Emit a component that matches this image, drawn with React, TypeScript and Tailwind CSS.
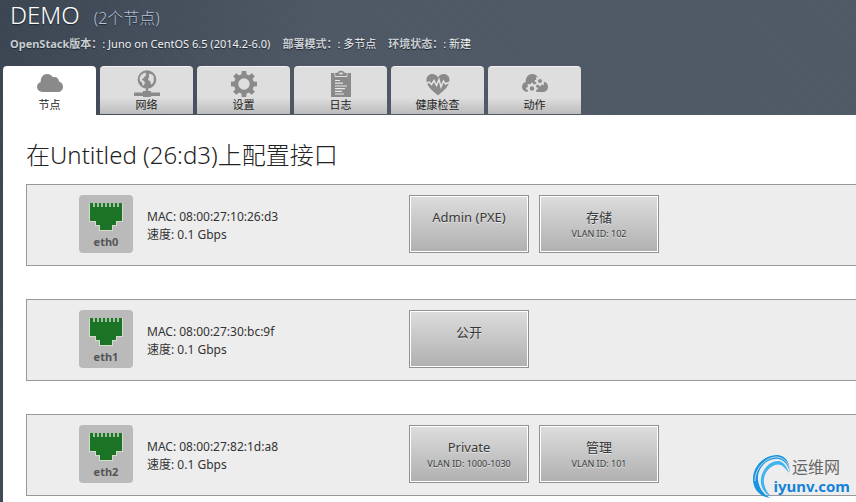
import type { ReactNode } from 'react'

type Network = { name: string; vlan?: string }
type Nic = { name: string; mac: string; speed: string; networks: Network[] }

const NICS: Nic[] = [
  {
    name: 'eth0',
    mac: '08:00:27:10:26:d3',
    speed: '0.1 Gbps',
    networks: [{ name: 'Admin (PXE)' }, { name: '存储', vlan: '102' }],
  },
  {
    name: 'eth1',
    mac: '08:00:27:30:bc:9f',
    speed: '0.1 Gbps',
    networks: [{ name: '公开' }],
  },
  {
    name: 'eth2',
    mac: '08:00:27:82:1d:a8',
    speed: '0.1 Gbps',
    networks: [{ name: 'Private', vlan: '1000-1030' }, { name: '管理', vlan: '101' }],
  },
]

const TEETH = [0, 45, 90, 135, 180, 225, 270, 315]

// ── Icons ───────────────────────────────────────────────────────────────────
function Icon({ children }: { children: ReactNode }) {
  return (
    <svg viewBox="0 0 28 28" className="h-7 w-7 shrink-0 text-[#8a8a8a]" fill="currentColor" aria-hidden="true">
      {children}
    </svg>
  )
}

const CLOUD =
  'M6.5 23C3.500 23 1 20.800 1 17.800C1 15.500 2.500 13.700 4.700 13C4.500 8.500 7.300 5 11.200 5C13.800 5 15.800 6.300 17 8.300C20 7.300 22.800 9.200 22.900 12.400C25.500 13 27 15.200 27 17.700C27 20.800 24.800 23 21.800 23Z'

function CloudIcon() {
  return (
    <Icon>
      <path d={CLOUD} />
    </Icon>
  )
}

function NetworkIcon() {
  return (
    <Icon>
      <circle cx="14" cy="10.500" r="9.300" />
      {/* continents */}
      <path
        d="M6.500 9L8 6L11 4L13.500 3.800L12.500 5.200L13.500 6.200L11.500 7.500L11 9L9.500 9.500L9 11L11 12L12 14L10.500 16.500L9.800 17L9 13.500L7 12Z"
        fill="#dedede"
      />
      <path
        d="M16.500 4.500L19.500 5.700L21 8L20.500 9.500L21 11L20 14L18.500 15.500L17.500 14L17.300 12L15.500 11.500L15 9.500L16.300 8L15.700 6.500Z"
        fill="#dedede"
      />
      <path d="M12.800 19H15.200V22H18V23.500H27V27H18V28H10V27H1V23.500H10V22H12.800Z" />
    </Icon>
  )
}

function GearShape({ cx, cy, scale, hole }: { cx: number; cy: number; scale: number; hole: number }) {
  return (
    <g transform={`translate(${cx} ${cy}) scale(${scale})`}>
      {TEETH.map(angle => (
        <path key={angle} d="M-2.700 -8L-2.200 -13H2.200L2.700 -8Z" transform={`rotate(${angle})`} />
      ))}
      <circle r={(10 + hole) / 2} fill="none" stroke="currentColor" strokeWidth={10 - hole} />
    </g>
  )
}

function GearIcon() {
  return (
    <Icon>
      <GearShape cx={14} cy={15} scale={1} hole={5.7} />
    </Icon>
  )
}

function ClipboardIcon() {
  return (
    <Icon>
      <path d="M4 4H24V28H4Z" />
      <path d="M8 4V7.500H20V4" fill="none" stroke="#dedede" strokeWidth="1" />
      <path d="M8.500 6.800V4L11 3.500C11.500 2 12.500 1.800 14 1.800C15.500 1.800 16.500 2 17 3.500L19.500 4V6.800Z" />
      <ellipse cx="14" cy="4.500" rx="2" ry="1" fill="#dedede" />
      <path
        d="M8 11.500H13M8 14.200H16M8 17H20M8 19.700H18M8 22.400H15M8 25H17"
        stroke="#e8e8e8"
        strokeWidth="1.200"
        fill="none"
      />
    </Icon>
  )
}

function HealthIcon() {
  return (
    <Icon>
      <path d="M14 26.500C10 22.500 2.500 18 2.500 11C2.500 7.500 5 5 8.300 5C10.800 5 13 6.500 14 8.500C15 6.500 17.200 5 19.700 5C23 5 25.500 7.500 25.500 11C25.500 18 18 22.500 14 26.500Z" />
      <path
        d="M2 15L5 13L7.500 15.500L10 11.500L12.500 16.500L15 10.500L17 18L19.500 12L21.500 15L26 13"
        stroke="#e4e4e4"
        strokeWidth="1.500"
        fill="none"
      />
    </Icon>
  )
}

function ActionsIcon() {
  return (
    <Icon>
      <path d={CLOUD} />
      <g className="text-[#dedede]">
        <GearShape cx={19} cy={12} scale={0.4} hole={5} />
        <GearShape cx={11} cy={19.5} scale={0.45} hole={5} />
      </g>
    </Icon>
  )
}

function PortIcon() {
  return (
    <svg viewBox="0 0 34 29" className="h-[29px] w-[34px]" aria-hidden="true">
      <path d="M0 1H34V20H28V24H24V29H10V24H6V20H0Z" fill="#d3dcc8" />
      <path d="M1 1H33V19H27V23H23V28H11V23H7V19H1Z" fill="#1b7426" />
      <path d="M5 1V5M9 1V5M13 1V5M17 1V5M21 1V5M25 1V5M29 1V5" stroke="#b5c9b0" strokeWidth="1.800" />
    </svg>
  )
}

// ── Header ──────────────────────────────────────────────────────────────────
const TABS = [
  { label: '节点', icon: <CloudIcon />, active: true },
  { label: '网络', icon: <NetworkIcon /> },
  { label: '设置', icon: <GearIcon /> },
  { label: '日志', icon: <ClipboardIcon /> },
  { label: '健康检查', icon: <HealthIcon /> },
  { label: '动作', icon: <ActionsIcon /> },
]

const INFO = [
  { label: 'OpenStack版本：', value: 'Juno on CentOS 6.5 (2014.2-6.0)' },
  { label: '部署模式：', value: '多节点' },
  { label: '环境状态：', value: '新建' },
]

function Header() {
  return (
    <header className="text-white">
      <h1 className="flex h-8 items-baseline gap-[14px] pl-[7px] text-2xl leading-[30px] font-light [text-shadow:0_1px_1px_#1f2730]">
        DEMO
        <span className="text-base leading-5 text-[#b4c4dc]">(2个节点)</span>
      </h1>
      <dl className="mt-1 flex h-4 gap-3 pl-[7px] text-[11px] leading-4 whitespace-nowrap [text-shadow:0_1px_1px_#1f2730]">
        {INFO.map(item => (
          <div key={item.label} className="flex">
            <dt className="font-bold text-[#c9cdd1]">{item.label}</dt>
            <dd className="text-[#f0f1f2]">: {item.value}</dd>
          </div>
        ))}
      </dl>
      <nav className="mt-[14px] flex gap-1">
        {TABS.map(tab => (
          <a
            key={tab.label}
            href="#"
            aria-current={tab.active ? 'page' : undefined}
            className={`flex w-[93px] flex-col items-center rounded-t text-[11px] leading-4 text-[#222] ${
              tab.active
                ? 'h-[49px] bg-white pt-[3px]'
                : 'h-12 border-t border-[#f2f2f2] bg-linear-to-b from-[#dedede] from-65% to-[#bcbcbc] pt-[2px]'
            }`}
          >
            {tab.icon}
            {tab.label}
          </a>
        ))}
      </nav>
    </header>
  )
}

// ── Interfaces ──────────────────────────────────────────────────────────────
function NetworkBlock({ name, vlan }: Network) {
  return (
    <button
      type="button"
      className="flex h-[58px] w-[120px] cursor-move flex-col items-center border border-[#929292] bg-linear-to-b from-[#dddddd] to-[#b0b0b0] pt-3 text-[#383838] shadow-[inset_0_0_0_1px_#fff] [text-shadow:0_1px_0_#e6e6e6]"
    >
      <span className="text-[13px] leading-[18px]">{name}</span>
      {vlan && <span className="text-[9px] leading-4">VLAN ID: {vlan}</span>}
    </button>
  )
}

function NicRow({ nic }: { nic: Nic }) {
  return (
    <li className="flex items-center border border-r-0 border-[#999] bg-[#ededed] pt-[10px] pb-3 pl-[52px]">
      <div className="flex h-[58px] w-[54px] shrink-0 flex-col items-center rounded bg-[#bababa] pt-[7px]">
        <PortIcon />
        <span className="text-[11px] leading-[22px] font-bold text-[#555]">{nic.name}</span>
      </div>
      <div className="ml-[14px] w-[262px] shrink-0 pt-1 text-[12px] leading-[18px] text-[#333]">
        <p>MAC: {nic.mac}</p>
        <p>速度: {nic.speed}</p>
      </div>
      <div className="flex gap-[10px]">
        {nic.networks.map(network => (
          <NetworkBlock key={network.name} {...network} />
        ))}
      </div>
    </li>
  )
}

function Watermark() {
  return (
    <div className="absolute right-1 bottom-[2px] h-12 w-[100px]">
      <svg viewBox="0 0 100 48" className="absolute inset-0" fill="none" aria-hidden="true">
        <path d="M18 45C7 43 1 36 1 26C1 12 14 1 26 2C34 3 38 10 38 19C35 10 30 5 23 6C12 7 5 17 6 27C7 35 11 41 18 45Z" fill="#1a94e0" />
        <path d="M20 44C11 40 8 33 9 25C11 14 20 7 27 8C32 9 35 14 37 20C32 13 28 10 23 12C15 15 11 23 12 30C13 36 16 41 20 44Z" fill="#42b4ee" />
        <path d="M3 28C3 15 14 4 25 4C32 5 36 9 38 17" stroke="#ededed" strokeWidth="0.800" />
      </svg>
      <div className="relative flex flex-col items-end pt-1 pr-[2px] whitespace-nowrap">
        <span className="mr-[10px] text-[16px] leading-5 text-[#666]">运维网</span>
        <span className="text-[15px] leading-[18px] font-bold text-[#1583d8]">iyunv.com</span>
      </div>
    </div>
  )
}

export default function App() {
  return (
    <div className="relative flex min-h-screen flex-col bg-[repeating-linear-gradient(45deg,#ffffff05_0_1px,transparent_1px_3px),linear-gradient(100deg,#3a4551,#4e5865_35%,#505a67)] pl-[3px] font-['Noto_Sans','Noto_Sans_CJK_SC',sans-serif]">
      <Header />
      <main className="flex-1 bg-white pt-6 pb-[7px] pl-[23px]">
        <h2 className="text-2xl leading-8 font-light text-[#222]">在Untitled (26:d3)上配置接口</h2>
        <ul className="mt-[13px] flex flex-col gap-[33px]">
          {NICS.map(nic => (
            <NicRow key={nic.name} nic={nic} />
          ))}
        </ul>
      </main>
      <Watermark />
    </div>
  )
}
